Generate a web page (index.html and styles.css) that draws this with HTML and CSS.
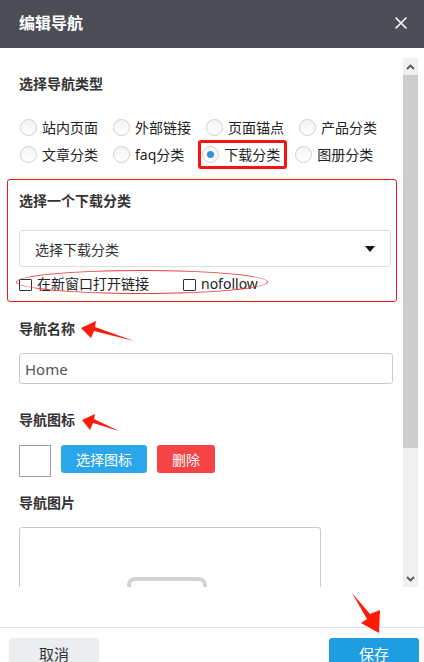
FILE: index.html
```html
<!DOCTYPE html>
<html lang="zh-CN">
<head>
<meta charset="utf-8">
<title>编辑导航</title>
<link rel="stylesheet" href="styles.css">
</head>
<body>
<div class="dialog">
  <header class="dlg-head">
    <h1 class="dlg-title">编辑导航</h1>
    <span class="dlg-close"><svg width="12" height="12" viewBox="0 0 12 12"><path d="M1 1L11 11M11 1L1 11" stroke="#fff" stroke-width="1.6" stroke-linecap="round"/></svg></span>
  </header>

  <div class="dlg-body">
    <div class="content">
      <div class="label">选择导航类型</div>
      <div class="radios">
        <div class="radio-row">
          <span class="radio"><span class="circle"></span>站内页面</span>
          <span class="radio"><span class="circle"></span>外部链接</span>
          <span class="radio"><span class="circle"></span>页面锚点</span>
          <span class="radio"><span class="circle"></span>产品分类</span>
        </div>
        <div class="radio-row">
          <span class="radio"><span class="circle"></span>文章分类</span>
          <span class="radio"><span class="circle"></span>faq分类</span>
          <span class="radio selected"><span class="circle"><span class="dot"></span></span>下载分类<span class="mark-box"></span></span>
          <span class="radio"><span class="circle"></span>图册分类</span>
        </div>
      </div>

      <div class="cat-box">
        <div class="label">选择一个下载分类</div>
        <div class="select">
          <span>选择下载分类</span>
          <svg width="10" height="6" viewBox="0 0 10 6"><path d="M0 0H10L5 6Z" fill="#111"/></svg>
        </div>
        <div class="checks">
          <span class="check"><span class="box"></span>在新窗口打开链接</span>
          <span class="check"><span class="box"></span>nofollow</span>
        </div>
        <span class="ellipse"></span>
      </div>

      <div class="label with-arrow">导航名称
        <svg class="arrow a1" width="58" height="26" viewBox="78 318 58 26"><polygon points="81,328 96,321 95,327 134,341 94,331 91,338" fill="#ff1a0a"/></svg>
      </div>
      <div class="input">Home</div>

      <div class="label with-arrow gap-lg">导航图标
        <svg class="arrow a2" width="44" height="24" viewBox="78 410 44 24"><polygon points="82,420 95,414 94,419 119,431 93,423 90,430" fill="#ff1a0a"/></svg>
      </div>
      <div class="icon-row">
        <span class="icon-box"></span>
        <span class="btn btn-blue">选择图标</span>
        <span class="btn btn-red">删除</span>
      </div>

      <div class="label gap-md">导航图片</div>
      <div class="img-box"><span class="img-ph"></span></div>
    </div>

    <div class="scrollbar">
      <div class="sb-btn"><svg width="9" height="6" viewBox="0 0 9 6"><path d="M1 5L4.5 1.5L8 5" fill="none" stroke="#555" stroke-width="1.8"/></svg></div>
      <div class="sb-thumb"></div>
      <div class="sb-track"></div>
      <div class="sb-btn"><svg width="9" height="6" viewBox="0 0 9 6"><path d="M1 1L4.5 4.5L8 1" fill="none" stroke="#555" stroke-width="1.8"/></svg></div>
    </div>
  </div>

  <footer class="dlg-foot">
    <span class="fbtn cancel">取消</span>
    <span class="fbtn save">保存</span>
  </footer>

  <svg class="arrow a3" width="36" height="48" viewBox="348 588 36 48"><polygon points="352,593 370,614 380,610 379,633 361,623 367,619" fill="#ff1a0a"/></svg>
</div>
</body>
</html>
```
FILE: styles.css
```css
* { box-sizing: border-box; }
html, body { margin: 0; padding: 0; background: #fff; }
body {
  font-family: "Noto Sans", "Noto Sans CJK SC", sans-serif;
  color: #333;
}
.dialog {
  position: relative;
  width: 424px;
  height: 662px;
  overflow: hidden;
  background: #fff;
}
.dlg-head {
  height: 48px;
  background: #4b4e56;
  display: flex;
  align-items: center;
  justify-content: space-between;
  padding: 0 17px 2px 19px;
}
.dlg-title {
  margin: 0;
  font-size: 16px;
  font-weight: bold;
  color: #fff;
  line-height: 22px;
}
.dlg-close { display: flex; width: 12px; height: 12px; }

.dlg-body {
  display: flex;
  height: 539px;
  margin-bottom: 40px;
}
.content {
  flex: 1;
  overflow: hidden;
  padding: 26px 10px 0 19px;
}
.label {
  font-size: 14px;
  font-weight: bold;
  line-height: 20px;
  color: #333;
}
.with-arrow { position: relative; margin-top: 17px; }
.gap-lg { margin-top: 26px; }
.gap-md { margin-top: 16px; }
.arrow { position: absolute; }
.a1 { left: 59px; top: -1px; }
.a2 { left: 59px; top: 0; }
.a3 { left: 348px; top: 588px; }

.radios { margin-top: 20px; padding-left: 1px; }
.radio-row {
  display: flex;
  gap: 15px;
  height: 27px;
  align-items: center;
}
.radio {
  position: relative;
  display: inline-flex;
  align-items: center;
  gap: 5px;
  font-size: 14px;
  line-height: 20px;
  color: #222;
  white-space: nowrap;
}
.circle {
  width: 17px;
  height: 17px;
  border-radius: 50%;
  border: 1px solid #cfcfcf;
  background: linear-gradient(#f4f4f4, #fff);
  display: flex;
  align-items: center;
  justify-content: center;
}
.dot {
  width: 7px;
  height: 7px;
  border-radius: 50%;
  background: #2a93dc;
}
.selected { margin-left: 3px; }
.mark-box {
  position: absolute;
  left: -4px;
  top: -5px;
  width: 89px;
  height: 29px;
  border: 3px solid #f5140f;
  border-radius: 3px;
}

.cat-box {
  position: relative;
  margin: 11px -4px 0 -12px;
  border: 1px solid #f01c14;
  border-radius: 3px;
  padding: 11px 5px 7px 11px;
}
.select {
  margin-top: 19px;
  height: 37px;
  border: 1px solid #ddd;
  border-radius: 3px;
  display: flex;
  align-items: center;
  justify-content: space-between;
  padding: 0 15px 0 15px;
  font-size: 14px;
  color: #333;
}
.checks {
  margin-top: 7px;
  display: flex;
  align-items: center;
  gap: 34px;
  height: 20px;
}
.check {
  display: inline-flex;
  align-items: center;
  gap: 5px;
  font-size: 14px;
  line-height: 20px;
  color: #222;
}
.box {
  width: 13px;
  height: 12px;
  border: 1px solid #333;
  border-radius: 1px;
  margin-top: 1px;
}
.ellipse {
  position: absolute;
  left: 8px;
  top: 90px;
  width: 252px;
  height: 24px;
  border: 1px solid #f03a3a;
  border-radius: 50%;
}

.input {
  margin-top: 14px;
  height: 31px;
  border: 1px solid #ccc;
  border-radius: 3px;
  padding: 0 5px;
  display: flex;
  align-items: center;
  font-size: 15px;
  color: #555;
}

.icon-row {
  margin-top: 15px;
  display: flex;
  align-items: flex-start;
  gap: 10px;
}
.icon-box {
  width: 32px;
  height: 32px;
  border: 1px solid #a0a0a0;
}
.btn {
  height: 28px;
  border-radius: 3px;
  color: #fff;
  font-size: 14px;
  display: flex;
  align-items: center;
  justify-content: center;
}
.btn-blue { width: 86px; background: #2ca6ea; }
.btn-red { width: 58px; background: #f54346; }

.img-box {
  margin-top: 14px;
  width: 302px;
  height: 160px;
  border: 1px solid #ccc;
  border-radius: 3px;
  padding: 49px 0 0 107px;
}
.img-ph {
  display: block;
  width: 80px;
  height: 40px;
  border: 4px solid #d4d4d4;
  border-radius: 8px;
}

.scrollbar {
  width: 15px;
  margin: 10px 6px 0 0;
  display: flex;
  flex-direction: column;
  background: #f0f0f0;
}
.sb-btn {
  height: 17px;
  display: flex;
  align-items: center;
  justify-content: center;
}
.sb-thumb { height: 373px; background: #cdcdcd; }
.sb-track { flex: 1; }

.dlg-foot {
  border-top: 1px solid #e5e5e5;
  display: flex;
  justify-content: space-between;
  padding: 10px 5px 0 9px;
}
.fbtn {
  width: 90px;
  height: 31px;
  border-radius: 3px;
  display: flex;
  align-items: center;
  justify-content: center;
  font-size: 15px;
  line-height: 20px;
}
.cancel { background: #ebedf0; color: #333; }
.save { background: #1f9de1; color: #fff; }
```
